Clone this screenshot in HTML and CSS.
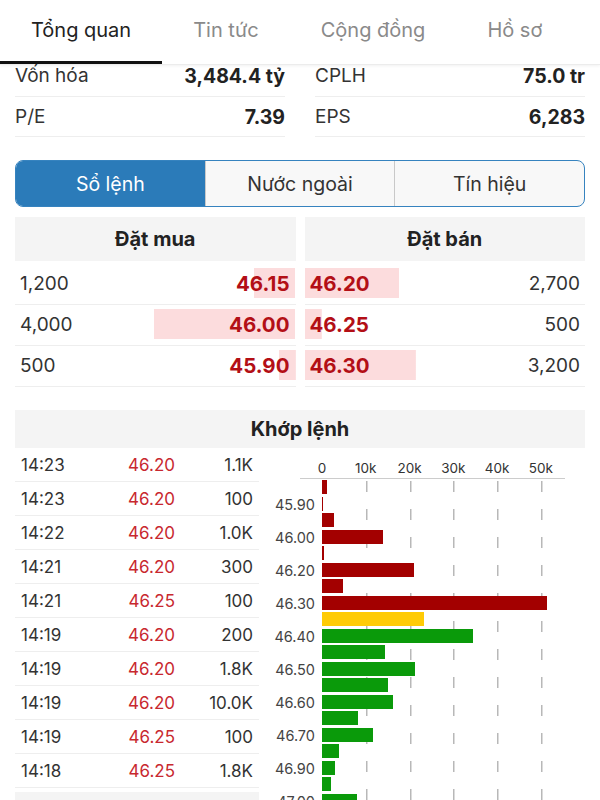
FILE: index.html
```html
<!DOCTYPE html>
<html lang="vi">
<head>
    <meta charset="UTF-8">
    <meta name="viewport" content="width=device-width, initial-scale=1.0">
    <title>Tổng quan</title>
    <link rel="stylesheet" href="styles.css">
</head>
<body>
    <div class="tabbar">
        <div class="tab active">Tổng quan</div>
        <div class="tab">Tin tức</div>
        <div class="tab">Cộng đồng</div>
        <div class="tab">Hồ sơ</div>
    </div>

    <div class="content">
        <div class="stats">
            <div class="stat-col">
                <div class="stat-row"><span>Vốn hóa</span><b>3,484.4 tỷ</b></div>
                <div class="stat-row"><span>P/E</span><b>7.39</b></div>
            </div>
            <div class="stat-col">
                <div class="stat-row"><span>CPLH</span><b>75.0 tr</b></div>
                <div class="stat-row"><span>EPS</span><b>6,283</b></div>
            </div>
        </div>

        <div class="segmented">
            <div class="segment active">Sổ lệnh</div>
            <div class="segment">Nước ngoài</div>
            <div class="segment">Tín hiệu</div>
        </div>

        <div class="book">
            <div class="book-side buy">
                <div class="section-head">Đặt mua</div>
                <div class="book-row" style="background-size: 14.6% 30px"><span>1,200</span><b>46.15</b></div>
                <div class="book-row" style="background-size: 50.2% 30px"><span>4,000</span><b>46.00</b></div>
                <div class="book-row" style="background-size: 6% 30px"><span>500</span><b>45.90</b></div>
            </div>
            <div class="book-side sell">
                <div class="section-head">Đặt bán</div>
                <div class="book-row" style="background-size: 33.6% 30px"><b>46.20</b><span>2,700</span></div>
                <div class="book-row" style="background-size: 6% 30px"><b>46.25</b><span>500</span></div>
                <div class="book-row" style="background-size: 39.6% 30px"><b>46.30</b><span>3,200</span></div>
            </div>
        </div>

        <div class="section-head match-head">Khớp lệnh</div>

        <div class="trades">
            <div class="trade-col">
                <div class="trade-list">
                    <div class="trade"><span>14:23</span><span class="price">46.20</span><span class="vol">1.1K</span></div>
                    <div class="trade"><span>14:23</span><span class="price">46.20</span><span class="vol">100</span></div>
                    <div class="trade"><span>14:22</span><span class="price">46.20</span><span class="vol">1.0K</span></div>
                    <div class="trade"><span>14:21</span><span class="price">46.20</span><span class="vol">300</span></div>
                    <div class="trade"><span>14:21</span><span class="price">46.25</span><span class="vol">100</span></div>
                    <div class="trade"><span>14:19</span><span class="price">46.20</span><span class="vol">200</span></div>
                    <div class="trade"><span>14:19</span><span class="price">46.20</span><span class="vol">1.8K</span></div>
                    <div class="trade"><span>14:19</span><span class="price">46.20</span><span class="vol">10.0K</span></div>
                    <div class="trade"><span>14:19</span><span class="price">46.25</span><span class="vol">100</span></div>
                    <div class="trade"><span>14:18</span><span class="price">46.25</span><span class="vol">1.8K</span></div>
                </div>
                <div class="section-head stat-head">Thống kê giao dịch</div>
            </div>

            <div class="chart">
                <div class="ticks">
                    <span>0</span><span>10k</span><span>20k</span><span>30k</span><span>40k</span><span>50k</span>
                </div>
                <div class="chart-body">
                    <div class="labels">
                        <span></span><span>45.90</span>
                        <span></span><span>46.00</span>
                        <span></span><span>46.20</span>
                        <span></span><span>46.30</span>
                        <span></span><span>46.40</span>
                        <span></span><span>46.50</span>
                        <span></span><span>46.60</span>
                        <span></span><span>46.70</span>
                        <span></span><span>46.90</span>
                        <span></span><span>47.00</span>
                    </div>
                    <div class="plot">
                        <div class="bar-row"><div class="bar down" style="width: 5px"></div></div>
                        <div class="bar-row"><div class="bar down" style="width: 1px"></div></div>
                        <div class="bar-row"><div class="bar down" style="width: 12px"></div></div>
                        <div class="bar-row"><div class="bar down" style="width: 61px"></div></div>
                        <div class="bar-row"><div class="bar down" style="width: 2px"></div></div>
                        <div class="bar-row"><div class="bar down" style="width: 92px"></div></div>
                        <div class="bar-row"><div class="bar down" style="width: 21px"></div></div>
                        <div class="bar-row"><div class="bar down" style="width: 225px"></div></div>
                        <div class="bar-row"><div class="bar ref" style="width: 102px"></div></div>
                        <div class="bar-row"><div class="bar up" style="width: 151px"></div></div>
                        <div class="bar-row"><div class="bar up" style="width: 63px"></div></div>
                        <div class="bar-row"><div class="bar up" style="width: 93px"></div></div>
                        <div class="bar-row"><div class="bar up" style="width: 66px"></div></div>
                        <div class="bar-row"><div class="bar up" style="width: 71px"></div></div>
                        <div class="bar-row"><div class="bar up" style="width: 36px"></div></div>
                        <div class="bar-row"><div class="bar up" style="width: 51px"></div></div>
                        <div class="bar-row"><div class="bar up" style="width: 17px"></div></div>
                        <div class="bar-row"><div class="bar up" style="width: 13px"></div></div>
                        <div class="bar-row"><div class="bar up" style="width: 9px"></div></div>
                        <div class="bar-row"><div class="bar up" style="width: 35px"></div></div>
                    </div>
                </div>
            </div>
        </div>
    </div>
</body>
</html>
```

FILE: styles.css
```css
body {
    margin: 0;
    font-family: Inter, "Noto Sans", sans-serif;
    color: #222;
    background: #fff;
    height: 800px;
    overflow: hidden;
}

.tabbar {
    display: flex;
    height: 64px;
    border-bottom: 1px solid #ececec;
    box-shadow: 0 1px 3px rgba(0, 0, 0, 0.06);
}
.tab {
    padding: 0 31px;
    font-size: 20px;
    line-height: 61px;
    color: #8a8a8a;
    border-bottom: 3px solid transparent;
}
.tab.active {
    color: #222;
    border-bottom-color: #111;
}

.content {
    padding: 0 15px;
}

.stats {
    display: grid;
    grid-template-columns: 1fr 1fr;
    gap: 30px;
}
.stat-row {
    display: flex;
    justify-content: space-between;
    align-items: center;
    height: 39px;
    border-bottom: 1px solid #eeeeee;
    font-size: 19px;
    line-height: 22px;
}
.stat-row:first-child {
    height: 31px;
    align-items: flex-start;
}
.stat-row span {
    color: #333;
}
.stat-row b {
    font-weight: 700;
    font-size: 19.5px;
    color: #222;
}

.segmented {
    display: flex;
    margin-top: 23px;
    height: 45px;
    border: 1.5px solid #3683bf;
    border-radius: 8px;
    overflow: hidden;
    background: #f8f8f8;
}
.segment {
    flex: 1;
    display: flex;
    align-items: center;
    justify-content: center;
    font-size: 19.5px;
    color: #333;
    border-left: 1px solid #c9c9c9;
}
.segment:first-child {
    border-left: none;
}
.segment.active {
    background: #2b7bb9;
    color: #fff;
}

.section-head {
    background: #f4f4f4;
    height: 44px;
    display: flex;
    align-items: center;
    justify-content: center;
    font-size: 20px;
    font-weight: 700;
    color: #222;
}

.book {
    display: grid;
    grid-template-columns: 1fr 1fr;
    gap: 9px;
    margin-top: 10px;
}
.book-side .section-head {
    margin-bottom: 3px;
}
.book-row {
    display: flex;
    justify-content: space-between;
    align-items: center;
    height: 39px;
    padding: 0 5px 1px;
    border-bottom: 1px solid #eeeeee;
    font-size: 19px;
    color: #333;
    background-image: linear-gradient(#fcdcdd, #fcdcdd);
    background-repeat: no-repeat;
}
.buy .book-row {
    background-position: right 0 top 4px;
    padding-right: 6px;
}
.sell .book-row {
    background-position: left 0 top 4px;
}
.book-row b {
    color: #b30f16;
    font-weight: 700;
    font-size: 20.5px;
}

.match-head {
    margin-top: 23px;
    height: 38px;
}

.trades {
    display: flex;
}
.trade-col {
    flex: none;
    width: 244px;
}
.trade {
    display: grid;
    grid-template-columns: 1fr 66px 78px;
    align-items: center;
    height: 33px;
    padding: 0 6px;
    border-bottom: 1px solid #eeeeee;
    font-size: 17px;
    color: #333;
}
.trade .price {
    color: #c8282f;
    text-align: right;
}
.trade .vol {
    text-align: right;
}
.stat-head {
    margin-top: 4px;
}

.chart {
    flex: 1;
    padding-top: 12px;
}
.ticks {
    display: flex;
    margin-left: 41px;
    margin-right: 20px;
    height: 18px;
    font-size: 13.5px;
    line-height: 16px;
    color: #333;
    border-bottom: 1px solid #cccccc;
}
.ticks span {
    width: 43.8px;
    flex: none;
    text-align: center;
}
.chart-body {
    display: flex;
}
.labels {
    flex: none;
    width: 56px;
    padding-right: 7px;
    display: grid;
    grid-auto-rows: 16.5px;
    text-align: right;
    font-size: 14.5px;
    line-height: 16.5px;
    color: #444;
}
.labels span {
    position: relative;
    top: 1px;
}
.plot {
    flex: 1;
    display: grid;
    grid-auto-rows: 16.5px;
    align-items: center;
    --dash: repeating-linear-gradient(to bottom, #b8b8b8 0 11px, transparent 11px 28px);
    background-image: var(--dash), var(--dash), var(--dash), var(--dash), var(--dash);
    background-size: 1.5px 100%;
    background-repeat: no-repeat;
    background-position: 44px 2px, 87.6px 2px, 131.4px 2px, 175.2px 2px, 219px 2px;
}
.bar {
    height: 14px;
}
.bar.down {
    background: #a30000;
}
.bar.ref {
    background: #ffcb05;
}
.bar.up {
    background: #0a9a0a;
}
```
